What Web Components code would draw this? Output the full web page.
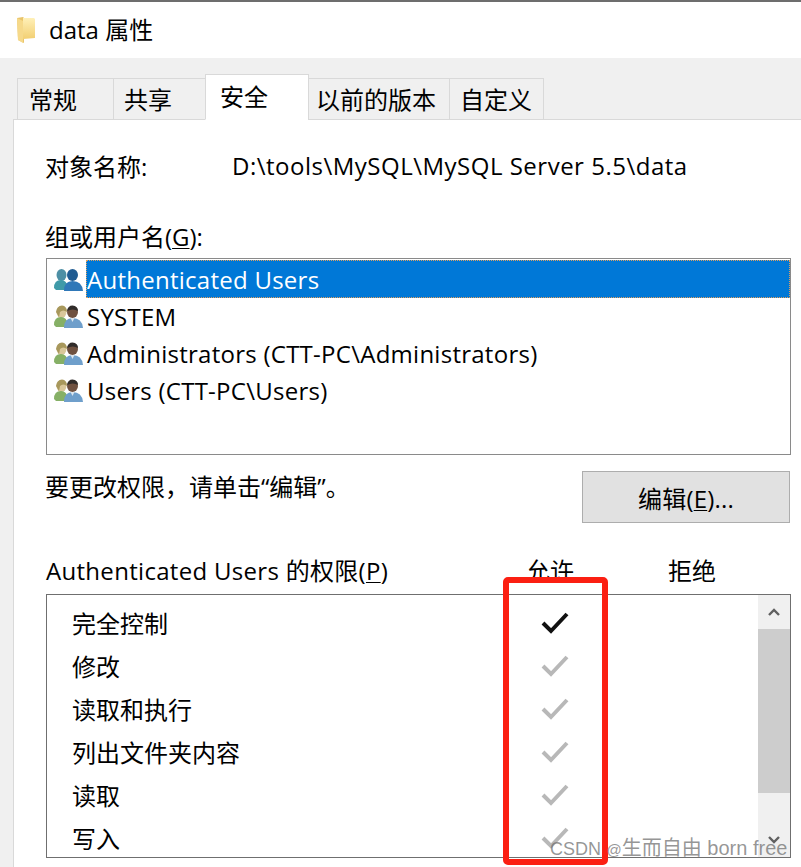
<!DOCTYPE html>
<html lang="zh">
<head>
<meta charset="utf-8">
<title>data 属性</title>
<style>
  html, body { margin: 0; padding: 0; background: #f0f0f0; }
  body {
    width: 801px;
    height: 867px;
    overflow: hidden;
    font-family: "Open Sans", "Noto Sans CJK SC", sans-serif;
    font-size: 24px;
    color: #000;
    position: relative;
  }
  water-mark .at { font-size: 15px; }
  water-mark .csdn { font-size: 18px; }
</style>
</head>
<body>
<title-bar>data 属性</title-bar>
<tab-strip>
  <tab-item pad="11" width="97">常规</tab-item>
  <tab-item pad="10" width="93">共享</tab-item>
  <tab-item pad="14" width="104" active>安全</tab-item>
  <tab-item pad="7" width="142">以前的版本</tab-item>
  <tab-item pad="10" width="95">自定义</tab-item>
</tab-strip>
<security-panel>
  <name-row>D:\tools\MySQL\MySQL Server 5.5\data</name-row>
  <user-list label="组或用户名(G):">
    <user-row selected>Authenticated Users</user-row>
    <user-row>SYSTEM</user-row>
    <user-row>Administrators (CTT-PC\Administrators)</user-row>
    <user-row>Users (CTT-PC\Users)</user-row>
  </user-list>
  <edit-row></edit-row>
  <perm-table>
    <perm-row state="on">完全控制</perm-row>
    <perm-row>修改</perm-row>
    <perm-row>读取和执行</perm-row>
    <perm-row>列出文件夹内容</perm-row>
    <perm-row>读取</perm-row>
    <perm-row>写入</perm-row>
  </perm-table>
</security-panel>
<red-mark></red-mark>
<water-mark><span class="csdn">CSDN</span> <span class="at">@</span>生而自由 born free</water-mark>

<script>
function define(name, css, html, extra) {
  class El extends HTMLElement {
    constructor() {
      super();
      this.attachShadow({ mode: "open" }).innerHTML = `<style>${css}</style>${html}`;
    }
    connectedCallback() {
      if (extra) extra.call(this);
    }
  }
  customElements.define(name, El);
}

const folderIcon = `
<svg width="20" height="28" viewBox="0 0 20 28">
  <defs><linearGradient id="f" x1="0" y1="0" x2="0" y2="1">
    <stop offset="0" stop-color="#fff0b8"/><stop offset="1" stop-color="#f2cf72"/>
  </linearGradient></defs>
  <path d="M0 2 L6 1 L7 2 L7 27 L1 24 Z" fill="#e9c46a"/>
  <path d="M6 2 L17 2 L18 3 L18 22 L6 23 Z" fill="url(#f)"/>
  <path d="M0 2 L6 5 L6 27 L1 24 Z" fill="#f6d98a"/>
</svg>`;

const peopleColored = `
<svg width="30" height="25" viewBox="0 0 30 25">
  <ellipse cx="7.5" cy="8" rx="5" ry="6" fill="#4d8fa5"/>
  <path d="M0 21 Q0 13 7 13 Q13 13 14 21 L12 23 L2 23 Z" fill="#3f9aa8"/>
  <ellipse cx="18.5" cy="8" rx="5.5" ry="6" fill="#1f5c92"/>
  <path d="M10 24 Q10 14 18.5 14 Q28 14 29 24 Z" fill="#2f78b8"/>
</svg>`;
const peopleNormal = `
<svg width="30" height="25" viewBox="0 0 30 25">
  <ellipse cx="7.5" cy="8" rx="5" ry="6" fill="#d9c79a"/>
  <path d="M2 8 Q3 1.5 8 1.5 Q13 2 13 8 Q9 5 6 8 L5 13 Z" fill="#a8985c"/>
  <path d="M0 21 Q0 13 7 13 Q13 13 14 21 L12 23 L2 23 Z" fill="#86b066"/>
  <ellipse cx="18.5" cy="8" rx="5.5" ry="6" fill="#6f5140"/>
  <path d="M13 7 Q14 1.5 18.5 1.5 Q24 2 24 7 Q19 4 13 7 Z" fill="#302c2a"/>
  <path d="M10 24 Q10 14 18.5 14 Q28 14 29 24 Z" fill="#6f9fcb"/>
  <path d="M16.5 14 L18.5 18 L20.5 14 Z" fill="#dbe6ef"/>
</svg>`;

define("title-bar", `
  :host { display: flex; align-items: center; box-sizing: border-box; height: 58px;
    border-top: 2px solid #6d6d6d; background: #fff; padding: 0 0 3px 17px; gap: 12px; }
  svg { display: block; margin-top: 3px; }
`, folderIcon + `<slot></slot>`);

define("tab-strip", `
  :host { display: flex; align-items: flex-end; height: 62px; padding-left: 18px; box-sizing: border-box;
    position: relative; z-index: 1; margin-bottom: -1px; }
`, `<slot></slot>`);

define("tab-item", `
  :host { display: flex; align-items: center; box-sizing: border-box;
    height: 42px; padding-bottom: 1px; background: #f0f0f0; border: 1px solid #d9d9d9;
    margin-left: -1px; white-space: nowrap; }
  :host([active]) { height: 46px; background: #fff; border-bottom-color: #fff; padding-bottom: 4px; }
`, `<slot></slot>`, function () {
  this.style.width = this.getAttribute("width") + "px";
  this.style.paddingLeft = this.getAttribute("pad") + "px";
});

define("security-panel", `
  :host { display: flex; flex-direction: column; box-sizing: border-box; height: 748px;
    margin-left: 13px; background: #fff; border-left: 1px solid #d9d9d9; border-top: 1px solid #d9d9d9;
    padding: 0 10px 0 32px; }
`, `<slot></slot>`);

define("name-row", `
  :host { display: flex; height: 47px; margin: 22px 0 0 -1px; align-items: center; letter-spacing: .5px; }
  .k { width: 187px; letter-spacing: 0; }
`, `<span class="k">对象名称:</span><slot></slot>`);

define("user-list", `
  :host { display: block; margin-top: 31px; }
  .lbl { height: 38px; line-height: 34px; margin-left: -1px; }
  u { text-underline-offset: 2px; text-decoration-thickness: 1px; }
  .box { box-sizing: border-box; height: 197px; border: 1px solid #8a8a8a; padding: 1px 0 0 7px; letter-spacing: .26px; }
`, `<div class="lbl">组或用户名(<u>G</u>):</div><div class="box"><slot></slot></div>`);

define("user-row", `
  :host { display: flex; align-items: center; height: 37px; }
  .ic { width: 30px; height: 25px; flex: none; margin-right: 2px; }
  .t { flex: 1; height: 38px; line-height: 39px; padding-left: 1px; box-sizing: border-box; }
  :host([selected]) .t { background: #0078d7; color: #fff; outline: 1px dotted #e0a060; outline-offset: -1px; }
`, `<span class="ic"></span><span class="t"><slot></slot></span>`, function () {
  this.shadowRoot.querySelector(".ic").innerHTML = this.hasAttribute("selected") ? peopleColored : peopleNormal;
});

define("edit-row", `
  :host { display: flex; justify-content: space-between; align-items: flex-start; height: 52px; margin-top: 16px; padding-right: 1px; }
  .m { line-height: 32px; margin-left: -1px; }
  .b { box-sizing: border-box; width: 208px; height: 52px; background: #e1e1e1; border: 1px solid #adadad;
    display: flex; align-items: center; justify-content: center; letter-spacing: .2px; }
  u { text-underline-offset: 2px; text-decoration-thickness: 1px; }
`, `<span class="m">要更改权限\uFF0C请单击“编辑”。</span><div class="b"><span>编辑(<u>E</u>)...</span></div>`);

define("perm-table", `
  :host { display: block; margin-top: 31px; }
  .head { display: grid; grid-template-columns: 444px 120px 164px; height: 40px; line-height: 33px; }
  .head span:first-child { letter-spacing: .3px; white-space: nowrap; }
  .head span:nth-child(n+2) { text-align: center; }
  u { text-underline-offset: 2px; text-decoration-thickness: 1px; }
  .box { box-sizing: border-box; height: 264px; border: 1px solid #6f6f6f; display: flex; }
  .rows { flex: 1; padding-top: 6px; overflow: hidden; }
  .bar { width: 32px; background: #f0f0f0; display: flex; flex-direction: column; }
  .arrow { height: 34px; display: flex; align-items: center; justify-content: center; flex: none; }
  .thumb { height: 164px; background: #cdcdcd; flex: none; }
  .grow { flex: 1; }
`, `<div class="head"><span>Authenticated Users 的权限(<u>P</u>)</span><span>允许</span><span>拒绝</span></div>
  <div class="box"><div class="rows"><slot></slot></div>
  <div class="bar">
    <div class="arrow"><svg width="14" height="10" viewBox="0 0 14 10"><path d="M2 8 L7 3 L12 8" fill="none" stroke="#606060" stroke-width="2.4"/></svg></div>
    <div class="thumb"></div><div class="grow"></div>
    <div class="arrow"><svg width="14" height="10" viewBox="0 0 14 10"><path d="M2 2 L7 7 L12 2" fill="none" stroke="#606060" stroke-width="2.4"/></svg></div>
  </div></div>`);

define("perm-row", `
  :host { display: flex; align-items: center; height: 43px; padding-left: 25px; }
  .t { width: 469px; }
  svg { display: block; }
`, `<span class="t"><slot></slot></span><svg width="28" height="24" viewBox="0 0 28 24"><path d="M2 12 L10 20 L26 3" fill="none" stroke-width="4"/></svg>`,
function () {
  this.shadowRoot.querySelector("path").setAttribute("stroke", this.getAttribute("state") === "on" ? "#111" : "#b8b8b8");
});

define("red-mark", `
  :host { position: absolute; left: 503px; top: 577px; width: 105px; height: 288px; box-sizing: border-box;
    border: 6px solid #fb1f12; border-radius: 5px; }
`, ``);

define("water-mark", `
  :host { position: absolute; left: 550px; top: 836px; font-size: 20px; line-height: 24px; color: rgba(110,110,110,.72);
    font-family: "Liberation Sans", "Noto Sans CJK SC", sans-serif; white-space: nowrap; }
`, `<slot></slot>`);
</script>
</body>
</html>
